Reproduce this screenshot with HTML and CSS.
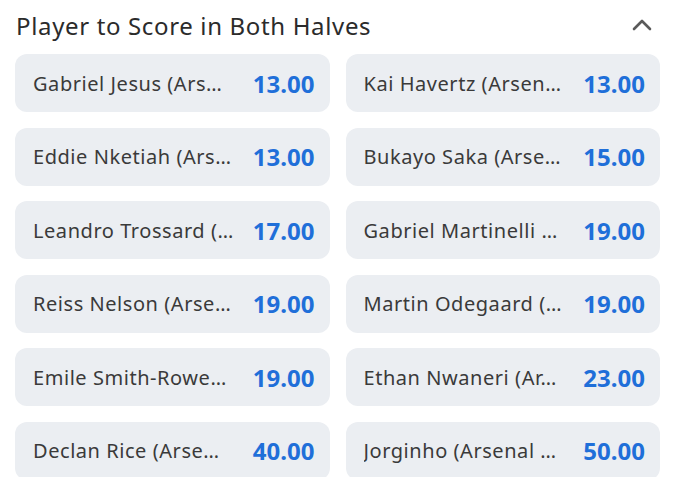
FILE: index.html
```html
<!DOCTYPE html>
<html>
<head>
<meta charset="utf-8">
<link rel="stylesheet" href="styles.css">
</head>
<body>
<div class="market">
  <div class="market-header">
    <span class="market-title">Player to Score in Both Halves</span>
    <svg class="chevron" width="20" height="12" viewBox="0 0 20 12"><path d="M2 10 L10 2 L18 10" fill="none" stroke="#5a5a5a" stroke-width="2.6" stroke-linecap="round" stroke-linejoin="round"/></svg>
  </div>
  <div class="grid">
    <div class="sel"><span class="name">Gabriel Jesus (Ars…</span><span class="odds">13.00</span></div>
    <div class="sel"><span class="name">Kai Havertz (Arsen…</span><span class="odds">13.00</span></div>
    <div class="sel"><span class="name">Eddie Nketiah (Ars…</span><span class="odds">13.00</span></div>
    <div class="sel"><span class="name">Bukayo Saka (Arse…</span><span class="odds">15.00</span></div>
    <div class="sel"><span class="name">Leandro Trossard (…</span><span class="odds">17.00</span></div>
    <div class="sel"><span class="name">Gabriel Martinelli …</span><span class="odds">19.00</span></div>
    <div class="sel"><span class="name">Reiss Nelson (Arse…</span><span class="odds">19.00</span></div>
    <div class="sel"><span class="name">Martin Odegaard (…</span><span class="odds">19.00</span></div>
    <div class="sel"><span class="name">Emile Smith-Rowe…</span><span class="odds">19.00</span></div>
    <div class="sel"><span class="name">Ethan Nwaneri (Ar…</span><span class="odds">23.00</span></div>
    <div class="sel"><span class="name">Declan Rice (Arse…</span><span class="odds">40.00</span></div>
    <div class="sel"><span class="name">Jorginho (Arsenal …</span><span class="odds">50.00</span></div>
  </div>
</div>
</body>
</html>
```
FILE: styles.css
```css
html, body { margin: 0; padding: 0; background: #fff; }
body { font-family: "Noto Sans", sans-serif; color: #333; }
.market { padding: 0 15px; }
.market-header { display: flex; align-items: center; justify-content: space-between; height: 50px; padding-left: 1px; padding-right: 8px; }
.market-title { font-size: 24px; letter-spacing: 0.65px; color: #2b2b2b; }
.chevron { display: block; }
.grid { display: grid; grid-template-columns: 1fr 1fr; column-gap: 16px; row-gap: 15.5px; margin-top: 4px; }
.sel { height: 58px; background: #ebeef2; border-radius: 12px; display: flex; align-items: center; justify-content: space-between; gap: 12px; padding: 0 15px 0 18px; }
.name { font-size: 20px; letter-spacing: 0.55px; color: #3a3a3a; white-space: nowrap; overflow: hidden; }
.odds { font-size: 24px; font-weight: 700; color: #1f6fd9; flex: none; }
```
